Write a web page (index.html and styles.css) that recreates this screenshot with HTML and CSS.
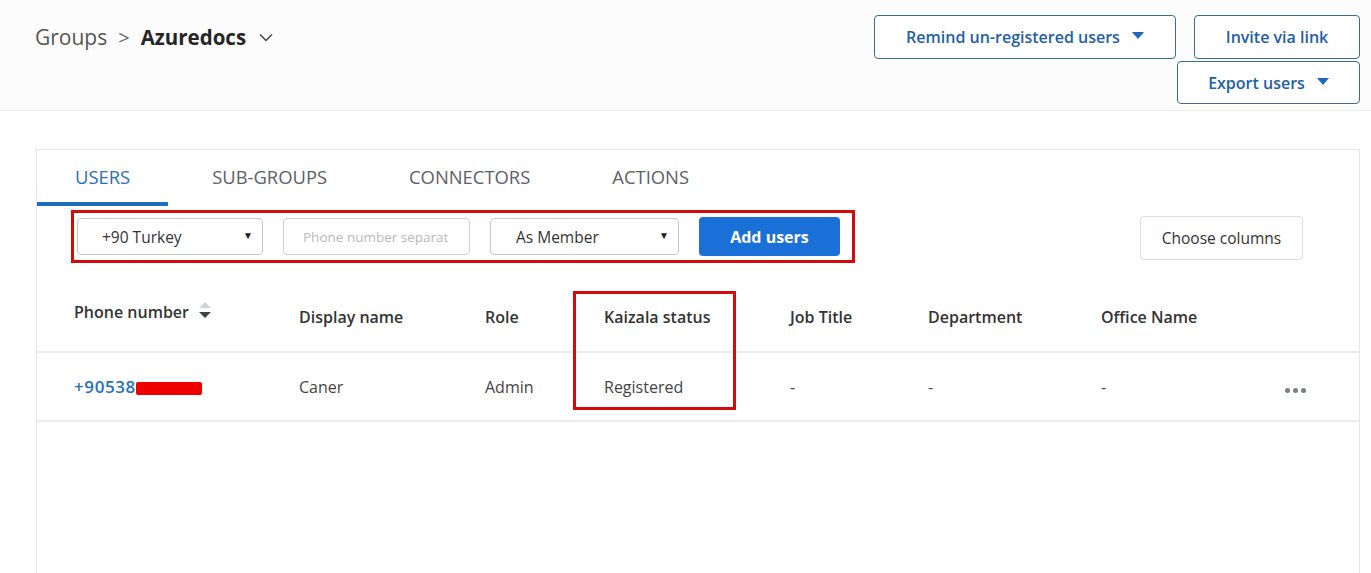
FILE: index.html
```html
<!DOCTYPE html>
<html lang="en">
<head>
  <meta charset="UTF-8" />
  <title>Azuredocs - Users</title>
  <link rel="stylesheet" href="styles.css">
</head>
<body>

<!-- Top bar -->
<header class="topbar">
  <div class="crumbs">
    <span class="crumb-root">Groups</span>
    <span class="crumb-sep">&gt;</span>
    <span class="crumb-current">Azuredocs</span>
    <svg class="crumb-chevron" width="14" height="9" viewBox="0 0 14 9"><path d="M1 1.5l6 6 6-6" fill="none" stroke="#444" stroke-width="1.5"/></svg>
  </div>

  <div class="top-actions">
    <div class="action-row">
      <button class="outline-btn remind-btn">Remind un-registered users <span class="caret"></span></button>
      <button class="outline-btn invite-btn">Invite via link</button>
    </div>
    <button class="outline-btn export-btn">Export users <span class="caret"></span></button>
  </div>
</header>

<!-- Main card -->
<main class="page">
  <div class="card">
    <nav class="tabs">
      <a href="#" class="tab active">USERS</a>
      <a href="#" class="tab">SUB-GROUPS</a>
      <a href="#" class="tab">CONNECTORS</a>
      <a href="#" class="tab">ACTIONS</a>
    </nav>

    <div class="toolbar">
      <div class="add-form">
        <div class="fake-select country">+90 Turkey <span class="sel-caret">&#9660;</span></div>
        <input class="phone-input" type="text" placeholder="Phone number separat" />
        <div class="fake-select role">As Member <span class="sel-caret">&#9660;</span></div>
        <button class="add-btn">Add users</button>
      </div>
      <button class="columns-btn">Choose columns</button>
    </div>

    <div class="table-wrap">
      <table class="users">
        <colgroup>
          <col style="width: 262px">
          <col style="width: 186px">
          <col style="width: 119px">
          <col style="width: 186px">
          <col style="width: 138px">
          <col style="width: 173px">
          <col style="width: 175px">
          <col>
        </colgroup>
        <thead>
          <tr>
            <th class="sortable">Phone number
              <span class="sort-icon">
                <svg width="14" height="18" viewBox="0 0 14 18"><path d="M7 1l6 6H1z" fill="#cfd3d8"/><path d="M7 17l6-6H1z" fill="#3d4249"/></svg>
              </span>
            </th>
            <th>Display name</th>
            <th>Role</th>
            <th>Kaizala status</th>
            <th>Job Title</th>
            <th>Department</th>
            <th>Office Name</th>
            <th></th>
          </tr>
        </thead>
        <tbody>
          <tr>
            <td><a href="#" class="phone-link">+90538</a><span class="redacted"></span></td>
            <td>Caner</td>
            <td>Admin</td>
            <td>Registered</td>
            <td>-</td>
            <td>-</td>
            <td>-</td>
            <td class="more"><span class="dots"><i></i><i></i><i></i></span></td>
          </tr>
        </tbody>
      </table>
      <!-- annotation box over the status column -->
      <div class="highlight"></div>
    </div>
  </div>
</main>

</body>
</html>
```

FILE: styles.css
```css
* { margin: 0; padding: 0; box-sizing: border-box; }

body {
  font-family: 'Open Sans', 'Noto Sans', sans-serif;
  background: #fff;
  color: #333;
  overflow: hidden;
}

/* Top bar */
.topbar {
  height: 111px;
  background: #fcfcfd;
  border-bottom: 1px solid #ececee;
  display: flex;
  justify-content: space-between;
  padding: 0 11px 0 35px;
}

.crumbs {
  display: flex;
  align-items: center;
  height: 74px;
}

.crumb-root {
  font-size: 21px;
  color: #555;
}

.crumb-sep {
  font-size: 20px;
  color: #666;
  margin: 0 11px 0 11px;
}

.crumb-current {
  font-size: 20.5px;
  font-weight: 700;
  color: #252525;
}

.crumb-chevron {
  margin-left: 13px;
  margin-top: 1px;
}

.top-actions {
  display: flex;
  flex-direction: column;
  align-items: flex-end;
  padding-top: 15px;
  gap: 2px;
}

.action-row {
  display: flex;
  gap: 18px;
}

.outline-btn {
  height: 44px;
  background: #fff;
  border: 1px solid #3c6a98;
  border-radius: 4px;
  color: #2260a4;
  font-family: inherit;
  font-size: 16px;
  font-weight: 600;
  display: flex;
  align-items: center;
  justify-content: center;
  cursor: pointer;
}

.remind-btn { width: 302px; }
.invite-btn { width: 166px; }
.export-btn { width: 183px; height: 43px; }

.caret {
  display: inline-block;
  width: 0;
  height: 0;
  border-left: 6px solid transparent;
  border-right: 6px solid transparent;
  border-top: 7px solid #1f66c1;
  margin-left: 12px;
  margin-top: -3px;
}

/* Card */
.page {
  padding: 38px 11px 0 36px;
}

.card {
  border: 1px solid #e6e6e8;
  border-bottom: none;
  min-height: 470px;
}

.tabs {
  display: flex;
  height: 56px;
}

.tab {
  display: flex;
  align-items: center;
  padding: 1px 41px 0 38px;
  font-size: 18.4px;
  color: #5b5f66;
  text-decoration: none;
  border-bottom: 4px solid transparent;
  margin-right: 3px;
}

.tab.active {
  color: #2b6fb4;
  border-bottom-color: #1f6dbd;
  padding-right: 38px;
  margin-right: 6px;
}

/* Toolbar */
.toolbar {
  display: flex;
  justify-content: space-between;
  align-items: flex-start;
  padding: 4px 56px 0 34px;
}

.add-form {
  display: flex;
  gap: 20px;
  align-items: center;
  border: 3px solid #d40b0b;
  padding: 3px 12px 3px 3px;
  height: 53px;
}

.fake-select {
  height: 37px;
  border: 1px solid #c8c8c8;
  border-radius: 4px;
  display: flex;
  align-items: center;
  justify-content: space-between;
  padding: 0 9px 0 24px;
  font-size: 15.5px;
  color: #333;
}

.fake-select.country { width: 186px; }
.fake-select.role { width: 189px; padding-left: 25px; }

.sel-caret {
  font-size: 10px;
  color: #222;
  margin-top: -3px;
}

.phone-input {
  width: 187px;
  height: 37px;
  border: 1px solid #cfcfcf;
  border-radius: 4px;
  padding: 0 19px;
  font-family: inherit;
  font-size: 13.5px;
  color: #333;
}

.phone-input::placeholder { color: #b9b9b9; }

.add-btn {
  width: 141px;
  height: 39px;
  background: #1b70d8;
  border: none;
  border-radius: 4px;
  color: #fff;
  font-family: inherit;
  font-size: 16px;
  font-weight: 700;
  cursor: pointer;
}

.columns-btn {
  width: 163px;
  height: 44px;
  margin-top: 6px;
  background: #fff;
  border: 1px solid #dcdcdc;
  border-radius: 4px;
  font-family: inherit;
  font-size: 15.5px;
  color: #333;
  cursor: pointer;
}

/* Table */
.table-wrap {
  position: relative;
}

.users {
  width: 100%;
  border-collapse: collapse;
  table-layout: fixed;
}

.users th {
  height: 89px;
  text-align: left;
  vertical-align: bottom;
  padding: 0 0 23px 0;
  font-size: 16px;
  font-weight: 600;
  color: #333;
  border-bottom: 2px solid #ebebed;
  white-space: nowrap;
}

.users th:first-child,
.users td:first-child { padding-left: 37px; }

.users th.sortable { padding-bottom: 27px; }

.sort-icon {
  display: inline-block;
  margin-left: 5px;
  vertical-align: -1px;
}

.users td {
  height: 69px;
  font-size: 16px;
  color: #444;
  border-bottom: 2px solid #ebebed;
  white-space: nowrap;
}

.phone-link {
  color: #2b6fb4;
  font-weight: 600;
  font-size: 17px;
  letter-spacing: 0.6px;
  text-decoration: none;
}

.redacted {
  display: inline-block;
  width: 66px;
  height: 13px;
  background: #ee0000;
  border-radius: 2px;
  vertical-align: -2px;
}

.more { text-align: left; }

.dots {
  display: inline-flex;
  gap: 3px;
  margin-left: 9px;
  margin-top: 4px;
}

.dots i {
  width: 5px;
  height: 5px;
  border-radius: 50%;
  background: #7a7e85;
}

.highlight {
  position: absolute;
  left: 536px;
  top: 28px;
  width: 163px;
  height: 119px;
  border: 3px solid #d40b0b;
  pointer-events: none;
}
```
